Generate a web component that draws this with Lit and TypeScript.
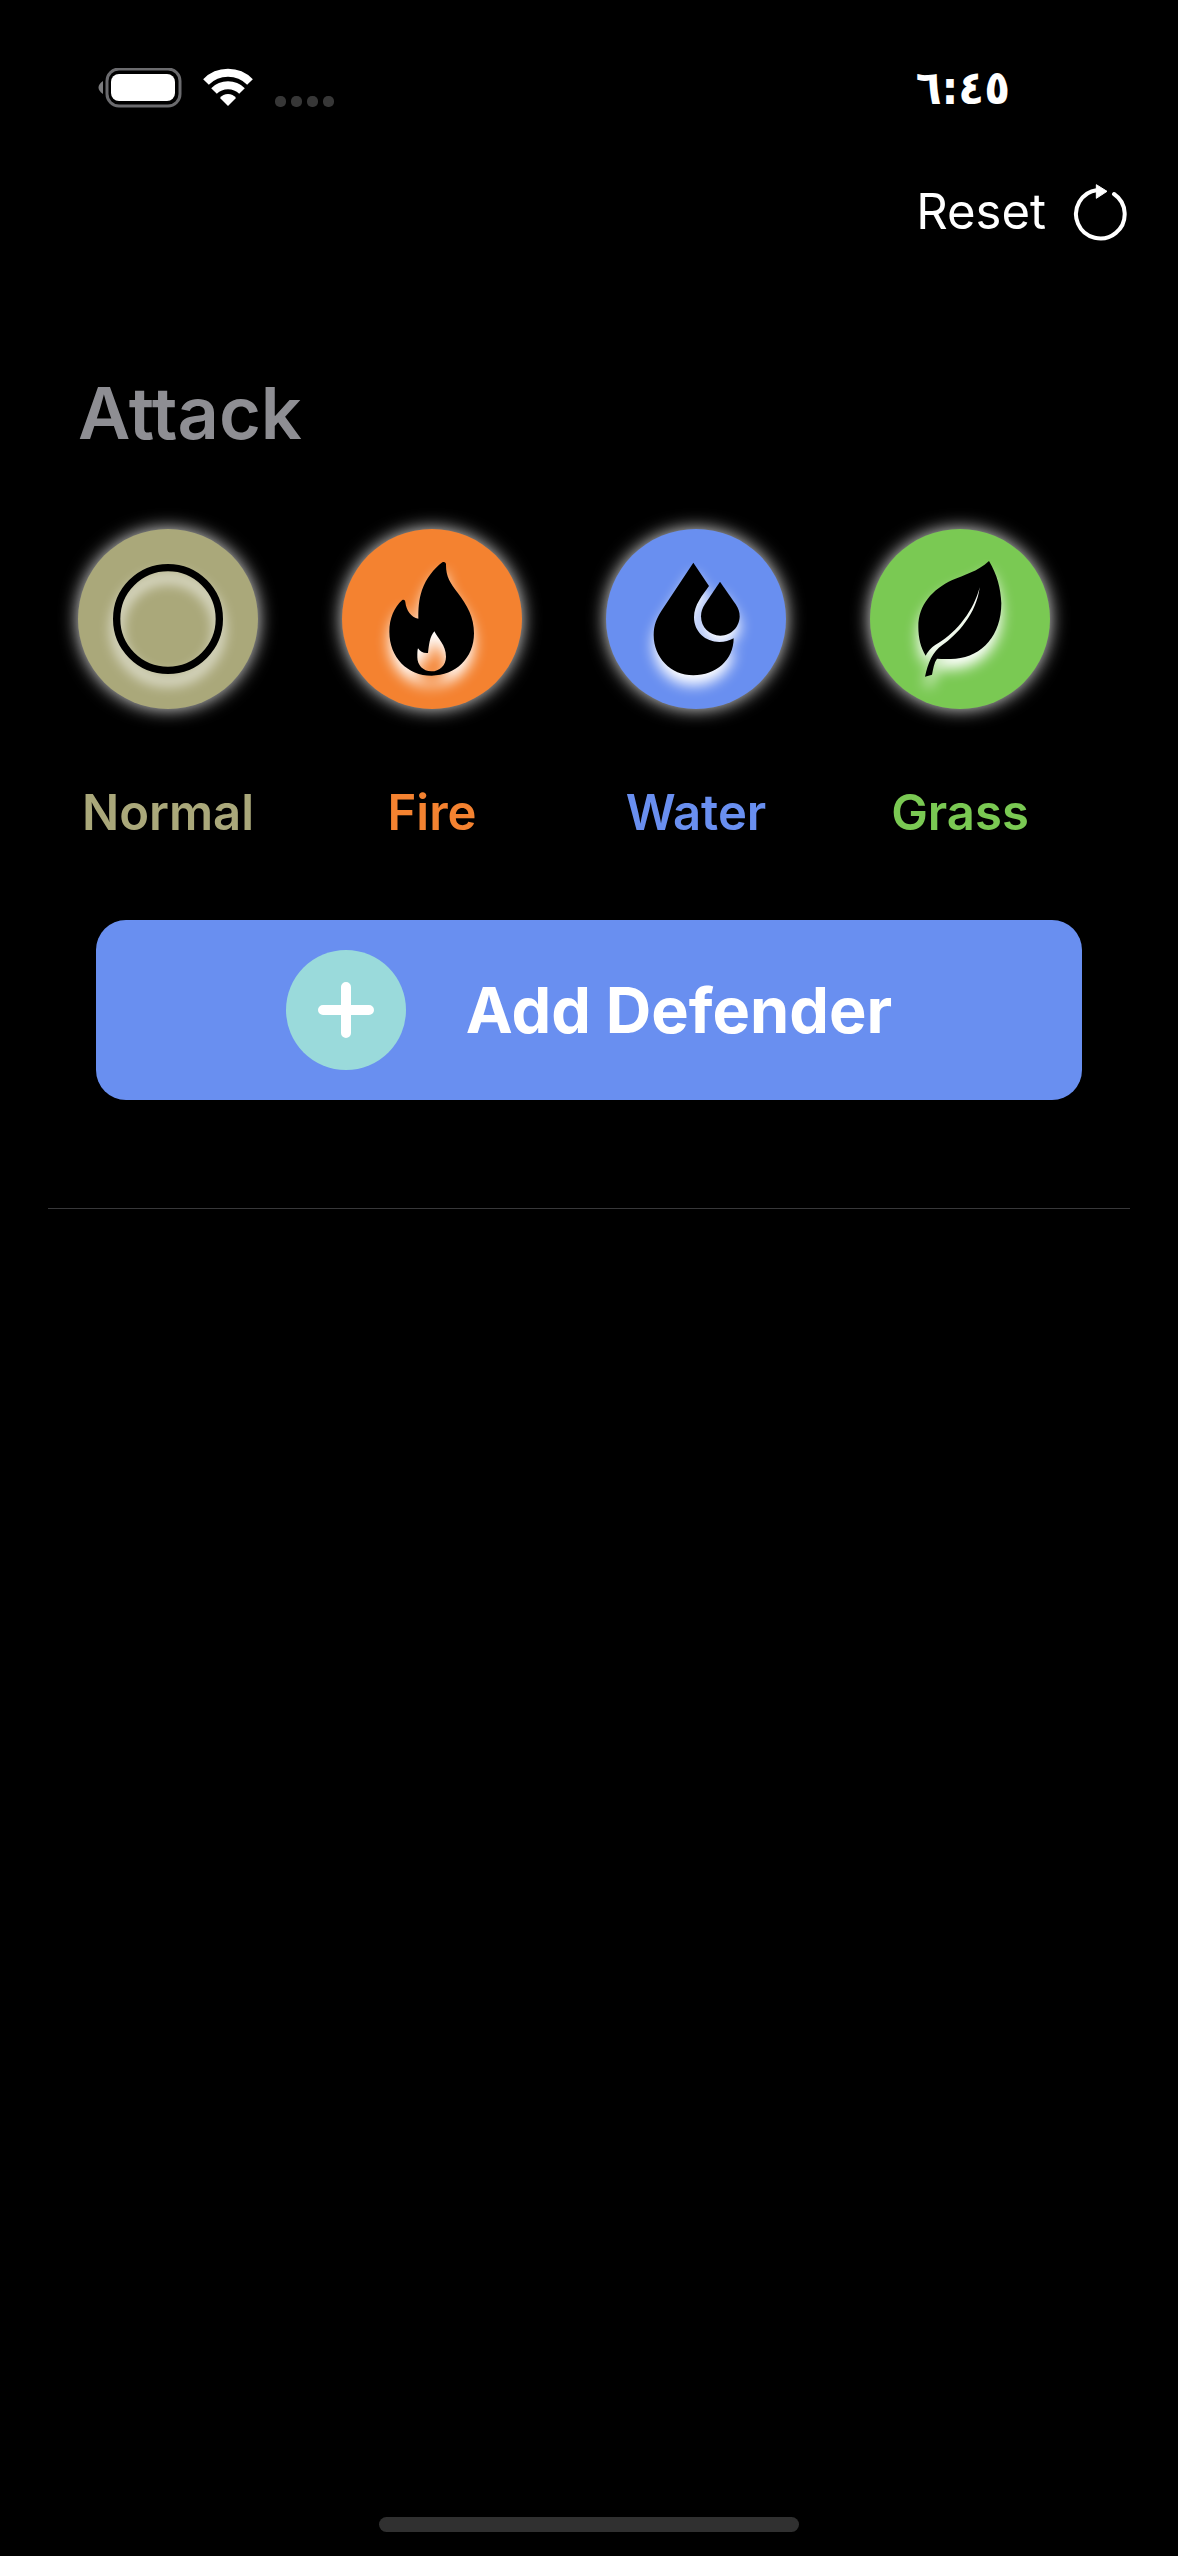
import { LitElement, html, css, svg } from "lit";
import { customElement, property } from "lit/decorators.js";

type TypeName = "normal" | "fire" | "water" | "grass";

const GLYPHS: Record<TypeName, { box: string; shape: unknown }> = {
  normal: {
    box: "53 57 540 540",
    shape: svg`<circle cx="323" cy="327" r="154" fill="none" stroke="#000" stroke-width="22"/>`,
  },
  fire: {
    box: "65 57 540 540",
    shape: svg`<path fill-rule="evenodd" d="M366 157C372 154 378 157 377 166C377 200 390 220 412 248C441 286 461 322 461 370C461 445 405 497 334 497C262 497 207 442 207 365C207 325 222 292 245 271C250 268 254 270 255 276C258 302 272 322 294 326C294 296 295 270 305 240C318 205 340 177 366 157ZM342 364C352 385 377 405 377 440C377 466 358 484 333 484C308 484 291 465 291 442C291 430 291 420 293 415C300 425 308 430 323 429C326 405 328 380 342 364Z"/>`,
  },
  water: {
    box: "60 57 540 540",
    shape: svg`<path d="M322 158L369 228C350 255 324 285 324 322C324 365 358 396 400 396C417 396 430 392 443 385C443 450 390 496 322 496C254 496 203 442 203 375C203 345 212 325 226 303Z"/><path d="M402 215L450 284C457 295 461 306 461 318C461 350 436 377 403 377C370 377 345 352 345 319C345 305 349 294 357 282Z"/>`,
  },
  grass: {
    box: "58 57 540 540",
    shape: svg`<path d="M415 153C380 185 340 195 305 210C245 238 203 285 203 350C203 385 210 412 225 437C235 420 245 410 262 400C320 365 370 300 387 232C378 310 320 375 275 405C245 425 232 460 223 500L244 494C248 475 250 458 259 446C275 447 295 447 315 446C395 440 452 375 452 280C450 235 440 195 415 153Z"/>`,
  },
};

@customElement("status-bar")
export class StatusBar extends LitElement {
  static styles = css`
    :host {
      display: flex;
      align-items: center;
      justify-content: space-between;
      height: 48px;
      padding: 64px 168px 0 96px;
      color: #fff;
    }
    .signals {
      display: flex;
      align-items: center;
    }
    .battery {
      width: 88px;
      height: 40px;
    }
    .wifi {
      width: 52px;
      height: 40px;
      margin-left: 18px;
    }
    .dots {
      display: flex;
      gap: 5px;
      margin: 27px 0 0 21px;
    }
    .dot {
      width: 11px;
      height: 11px;
      border-radius: 5px;
      background: #373737;
    }
    .time {
      font: 700 47px/44px "DejaVu Sans Condensed", "DejaVu Sans", sans-serif;
    }
  `;

  render() {
    return html`
      <div class="signals">
        <svg class="battery" viewBox="0 0 88 40" aria-hidden="true">
          <path d="M7 13C1 17 1 22 7 26Z" fill="#7c7c7e" />
          <rect x="11" y="1" width="73" height="37" rx="12" fill="none" stroke="#6b6b6e" stroke-width="3" />
          <rect x="15" y="6" width="64" height="27" rx="8" fill="#fff" />
        </svg>
        <svg class="wifi" viewBox="0 0 52 40" aria-hidden="true">
          <g fill="none" stroke="#fff" stroke-width="8">
            <path d="M4 14A31 31 0 0 1 48 14" />
            <path d="M12 23A20 20 0 0 1 40 23" />
          </g>
          <path d="M26 38L18 30A10 10 0 0 1 34 30Z" fill="#fff" />
        </svg>
        <div class="dots">
          <span class="dot"></span><span class="dot"></span><span class="dot"></span><span class="dot"></span>
        </div>
      </div>
      <time class="time" datetime="06:45">٦:٤٥</time>
    `;
  }
}

@customElement("type-button")
export class TypeButton extends LitElement {
  @property() name: TypeName = "normal";

  static styles = css`
    :host {
      display: block;
    }
    .type {
      display: flex;
      flex-direction: column;
      align-items: center;
      gap: 74px;
      width: 180px;
      padding: 0;
      border: 0;
      background: none;
      font: 600 49px/60px Inter, sans-serif;
      cursor: pointer;
    }
    .disc {
      width: 180px;
      height: 180px;
      border-radius: 50%;
      background: currentColor;
      box-shadow: 0 0 18px rgb(255 255 255 / 90%);
    }
    .glyph {
      display: block;
      width: 100%;
      height: 100%;
      filter: drop-shadow(0 10px 7px #fff);
    }
    .label {
      text-transform: capitalize;
    }
    .normal {
      color: #aaa87a;
    }
    .fire {
      color: #f48230;
    }
    .water {
      color: #698ff0;
    }
    .grass {
      color: #7ac953;
    }
  `;

  render() {
    const glyph = GLYPHS[this.name];
    return html`
      <button class="type ${this.name}" type="button">
        <span class="disc">
          <svg class="glyph" viewBox=${glyph.box} aria-hidden="true">${glyph.shape}</svg>
        </span>
        <span class="label">${this.name}</span>
      </button>
    `;
  }
}

@customElement("app-root")
export class AppRoot extends LitElement {
  private types: TypeName[] = ["normal", "fire", "water", "grass"];

  static styles = css`
    :host {
      display: flex;
      flex-direction: column;
      min-height: 100vh;
      background: #000;
      font-family: Inter, sans-serif;
      overflow: hidden;
    }
    button {
      border: 0;
      cursor: pointer;
      font-family: inherit;
      color: #fff;
    }
    .toolbar {
      display: flex;
      justify-content: flex-end;
      padding: 70px 50px 0;
    }
    .reset {
      display: flex;
      align-items: center;
      gap: 26px;
      padding: 0;
      background: none;
      font-size: 49px;
      line-height: 60px;
    }
    .reset-icon {
      width: 56px;
      height: 58px;
    }
    .title {
      margin: 126px 78px 71px;
      color: #8e8e93;
      font-size: 72px;
      line-height: 90px;
      font-weight: 600;
    }
    .types {
      display: flex;
      gap: 84px;
      padding: 0 78px;
    }
    .add {
      display: flex;
      align-items: center;
      justify-content: center;
      gap: 60px;
      height: 180px;
      margin: 77px 96px 0;
      border-radius: 30px;
      background: #698ff0;
      font-size: 63px;
      line-height: 78px;
      font-weight: 700;
    }
    .plus {
      width: 120px;
      height: 120px;
      border-radius: 50%;
      background: #9adadb;
    }
    .divider {
      width: auto;
      height: 1px;
      margin: 108px 48px 0;
      border: 0;
      background: #38383a;
    }
    .home {
      width: 420px;
      height: 15px;
      margin: auto auto 24px;
      border-radius: 8px;
      background: #303030;
    }
  `;

  render() {
    return html`
      <status-bar></status-bar>
      <nav class="toolbar">
        <button class="reset" type="button">
          Reset
          <svg class="reset-icon" viewBox="576 430 168 174" aria-hidden="true">
            <path d="M702 463A73 73 0 1 1 652 451" fill="none" stroke="#fff" stroke-width="12" stroke-linecap="round" />
            <path d="M649 435L681 455L649 476Z" fill="#fff" stroke="#fff" stroke-width="3" stroke-linejoin="round" />
          </svg>
        </button>
      </nav>
      <h1 class="title">Attack</h1>
      <div class="types">
        ${this.types.map((name) => html`<type-button .name=${name}></type-button>`)}
      </div>
      <button class="add" type="button">
        <svg class="plus" viewBox="0 0 120 120" aria-hidden="true">
          <path d="M60 37V83M37 60H83" stroke="#fff" stroke-width="10" stroke-linecap="round" />
        </svg>
        Add Defender
      </button>
      <hr class="divider" />
      <div class="home"></div>
    `;
  }
}
